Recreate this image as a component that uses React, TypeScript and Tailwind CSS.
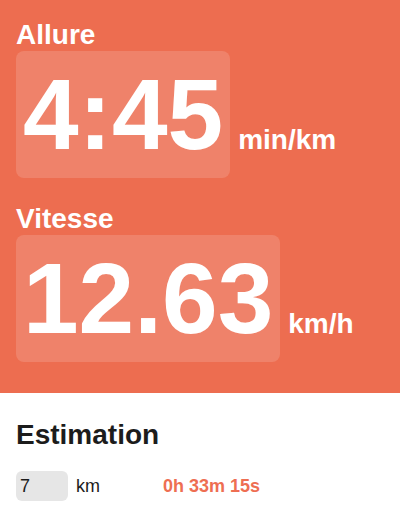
import React from 'react';

function Metric({ label, value, unit }: { label: string; value: string; unit: string }) {
  return (
    <div>
      <h2 className="text-[28px] font-bold leading-[32px] text-white">{label}</h2>
      <div className="flex items-baseline">
        <div className="rounded-lg bg-white/15 px-[7px] py-[6px] text-[100px] font-bold leading-[115px] text-white">
          {value}
        </div>
        <span className="ml-2 text-[28px] font-bold leading-[32px] text-white">{unit}</span>
      </div>
    </div>
  );
}

export default function App() {
  return (
    <div className="min-h-screen bg-white font-['Liberation_Sans',Arial,sans-serif]">
      <div className="flex flex-col gap-[25px] bg-[#ED6D50] px-4 pt-[19px] pb-[31px]">
        <Metric label="Allure" value="4:45" unit="min/km" />
        <Metric label="Vitesse" value="12.63" unit="km/h" />
      </div>

      <div className="px-4 pt-[26px]">
        <h2 className="text-[28px] font-bold leading-[32px] text-[#1c1c1c]">Estimation</h2>
        <div className="mt-5 flex items-center">
          <input
            type="text"
            defaultValue="7"
            className="h-[30px] w-[52px] rounded-md bg-[#e6e6e6] px-1 text-[18px] text-[#1c1c1c] outline-none"
          />
          <span className="ml-2 text-[18px] text-[#1c1c1c]">km</span>
          <span className="ml-[63px] text-[18px] font-bold text-[#EE6E52]">0h 33m 15s</span>
        </div>
      </div>
    </div>
  );
}
